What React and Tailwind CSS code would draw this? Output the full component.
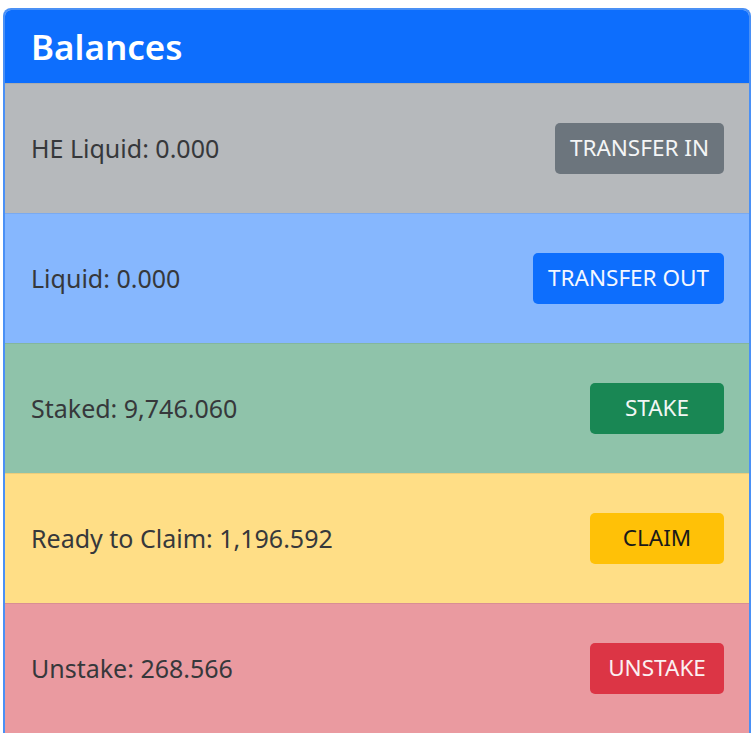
import React from "react";

const rows = [
  { label: "HE Liquid: 0.000", bg: "bg-[#b6b9bc]", line: "border-[#a9acaf]", btn: "TRANSFER IN", btnCls: "bg-[#6c757d] text-[#f4f5f6]" },
  { label: "Liquid: 0.000", bg: "bg-[#86b7fe]", line: "border-[#7aaaf0]", btn: "TRANSFER OUT", btnCls: "bg-[#0d6efd] text-[#f4f7ff]" },
  { label: "Staked: 9,746.060", bg: "bg-[#8fc3aa]", line: "border-[#84b69e]", btn: "STAKE", btnCls: "bg-[#198754] text-[#f2f7f4]" },
  { label: "Ready to Claim: 1,196.592", bg: "bg-[#ffde86]", line: "border-[#eccd7c]", btn: "CLAIM", btnCls: "bg-[#ffc107] text-[#1a1a1a]" },
  { label: "Unstake: 268.566", bg: "bg-[#ea9aa0]", line: "border-[#d98e94]", btn: "UNSTAKE", btnCls: "bg-[#dc3545] text-[#fbf0f1]" },
];

export default function App() {
  return (
    <div className="w-[753px] h-[733px] overflow-hidden bg-white pt-[8px] pl-[3px]" style={{ fontFamily: '"Noto Sans", "Open Sans", sans-serif' }}>
      <div className="w-[748px] border-x-2 border-t-2 border-[#4a90f5] rounded-t-[8px] overflow-hidden">
        <div className="h-[73px] bg-[#0d6efd] flex items-center pl-[26px]">
          <h1 className="text-white text-[35px] font-semibold leading-none">Balances</h1>
        </div>
        {rows.map((r, i) => (
          <div key={i} className={`h-[130px] ${r.bg} ${r.line} border-t flex items-center justify-between pl-[26px] pr-[25px]`}>
            <span className="text-[25px] text-[#36383b] leading-none">{r.label}</span>
            <button className={`${r.btnCls} h-[51px] min-w-[134px] px-[15px] rounded-[5px] text-[22.5px] leading-none`}>{r.btn}</button>
          </div>
        ))}
      </div>
    </div>
  );
}
